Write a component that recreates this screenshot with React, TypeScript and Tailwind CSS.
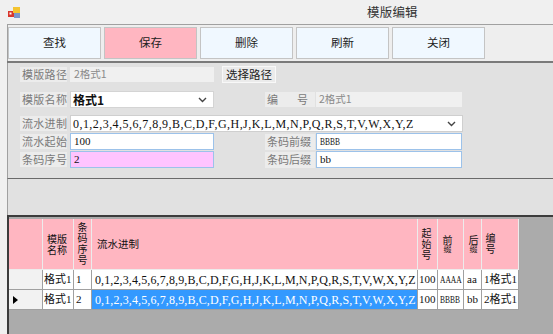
import React from "react";

const SEQ = "0,1,2,3,4,5,6,7,8,9,B,C,D,F,G,H,J,K,L,M,N,P,Q,R,S,T,V,W,X,Y,Z";

function Chevron() {
  return (
    <svg width="9" height="6" viewBox="0 0 9 6">
      <path d="M1 1 L4.5 4.5 L8 1" fill="none" stroke="#444" strokeWidth="1.4" />
    </svg>
  );
}

function Label({ children }: { children: React.ReactNode }) {
  return (
    <div className="w-[47px] h-[15px] bg-[#ececec] flex items-center pl-[2px] text-[11px] tracking-[0.3px] text-[#7a7a7a] font-['Noto_Sans_CJK_SC',sans-serif] leading-none whitespace-nowrap">
      {children}
    </div>
  );
}

function RLabel({ children }: { children: React.ReactNode }) {
  return (
    <div className="w-[50px] h-[16px] bg-[#ececec] flex items-center pl-[2px] text-[11px] text-[#7a7a7a] font-['Noto_Sans_CJK_SC',sans-serif] leading-none whitespace-nowrap">
      {children}
    </div>
  );
}

const tbBtn =
  "w-[93px] h-[32px] bg-[#f0f8ff] border border-[#c4c4c4] flex items-center justify-center text-[11.5px] text-[#222] font-['Noto_Sans_CJK_SC',sans-serif]";

const vText = "[writing-mode:vertical-lr] text-[10px] leading-[11px] tracking-[1px]";

export default function App() {
  return (
    <div className="w-[553px] h-[334px] overflow-hidden bg-[#f0f0f0] flex flex-col font-['Noto_Sans_CJK_SC',sans-serif]">
      {/* title bar */}
      <div className="h-[24px] flex items-center">
        <div className="ml-[8px] mt-[1px]">
          <svg width="13" height="11" viewBox="0 0 13 11">
            <rect x="0" y="4" width="6" height="6" fill="#d8362c" />
            <rect x="1.5" y="5.5" width="2" height="2" fill="#ffffff" />
            <rect x="5" y="0" width="7" height="6" fill="#f4c430" />
            <rect x="6" y="6" width="6" height="5" fill="#7b96c9" />
          </svg>
        </div>
        <div className="ml-[346px] text-[12.5px] text-[#333] tracking-[0.2px]">模版编辑</div>
      </div>

      <div className="ml-[7px] flex-1 flex flex-col">
        {/* toolbar */}
        <div className="h-[37px] border-t border-l border-[#a0a0a0] bg-[#eeeeee] flex items-center gap-[3px]">
          <div className={tbBtn}>查找</div>
          <div className="w-[93px] h-[32px] bg-[#ffb6c1] border border-[#c4c4c4] flex items-center justify-center text-[11.5px] text-[#222]">
            保存
          </div>
          <div className={tbBtn}>删除</div>
          <div className={tbBtn}>刷新</div>
          <div className={tbBtn}>关闭</div>
        </div>
        <div className="h-[2px] bg-[#7a7a7a]" />

        {/* form panel */}
        <div className="h-[116px] bg-[#e1e1e1] border-l border-[#a0a0a0] border-b border-b-[#6a6a6a] pt-[3px] pl-[12px] flex flex-col">
          {/* row 1 */}
          <div className="h-[17px] flex items-center">
            <Label>模版路径</Label>
            <div className="ml-[3px] w-[144px] h-[15px] bg-[#f0f0f0] flex items-center pl-[4px] text-[10.5px] text-[#8a8a8a] leading-none">
              2格式1
            </div>
            <div className="ml-[8px] w-[54px] h-[17px] bg-[#ebebeb] border border-[#f8f8f8] flex items-center justify-center text-[11.5px] text-[#222] leading-none">
              选择路径
            </div>
          </div>
          {/* row 2 */}
          <div className="h-[17px] mt-[8px] flex items-center">
            <Label>模版名称</Label>
            <div className="ml-[3px] w-[144px] h-[17px] bg-white border border-[#d4d4d4] flex items-center justify-between pl-[2px] pr-[6px]">
              <span className="text-[12px] font-bold text-[#111] leading-none">格式1</span>
              <Chevron />
            </div>
            <div className="ml-[51px]">
              <div className="w-[50px] h-[15px] bg-[#ececec] flex items-center pl-[2px] text-[11px] text-[#7a7a7a] leading-none">
                <span>编</span>
                <span className="ml-[19px]">号</span>
              </div>
            </div>
            <div className="ml-[1px] w-[146px] h-[15px] bg-[#f0f0f0] flex items-center pl-[3px] text-[10.5px] text-[#8a8a8a] leading-none">
              2格式1
            </div>
          </div>
          {/* row 3 */}
          <div className="h-[17px] mt-[7px] flex items-center">
            <Label>流水进制</Label>
            <div className="ml-[3px] w-[393px] h-[17px] bg-white border border-[#cfcfcf] flex items-center justify-between pl-[2px] pr-[6px]">
              <span className="text-[12px] tracking-[0.45px] text-[#111] leading-none font-['Liberation_Serif',serif]">
                {SEQ}
              </span>
              <Chevron />
            </div>
          </div>
          {/* row 4 */}
          <div className="h-[17px] mt-[1px] flex items-center">
            <Label>流水起始</Label>
            <div className="ml-[3px] w-[144px] h-[17px] bg-white border border-[#9cc2ea] flex items-center pl-[3px] text-[11px] text-[#111] leading-none font-['Liberation_Serif',serif]">
              100
            </div>
            <div className="ml-[51px]">
              <RLabel>条码前缀</RLabel>
            </div>
            <div className="ml-[1px] w-[146px] h-[17px] bg-white border border-[#9cc2ea] flex items-center pl-[3px] text-[11px] text-[#111] leading-none font-['Liberation_Serif',serif]">
              <span className="inline-block origin-left scale-x-[0.68]">BBBB</span>
            </div>
          </div>
          {/* row 5 */}
          <div className="h-[17px] mt-[1px] flex items-center">
            <Label>条码序号</Label>
            <div className="ml-[3px] w-[144px] h-[17px] bg-[#ffc4ff] border border-[#9cc2ea] flex items-center pl-[3px] text-[11px] text-[#111] leading-none font-['Liberation_Serif',serif]">
              2
            </div>
            <div className="ml-[51px]">
              <RLabel>条码后缀</RLabel>
            </div>
            <div className="ml-[1px] w-[146px] h-[17px] bg-white border border-[#9cc2ea] flex items-center pl-[3px] text-[11px] text-[#111] leading-none font-['Liberation_Serif',serif]">
              bb
            </div>
          </div>
        </div>

        {/* empty band */}
        <div className="h-[36px] bg-[#e1e1e1] border-l border-[#a0a0a0]" />

        {/* grid */}
        <div className="flex-1 bg-[#ababab] border-t-2 border-l-2 border-[#3c3c3c] pt-[2px]">
          <div className="grid grid-cols-[34px_31px_18px_326px_20px_26px_18px_37px] w-max text-[#111]">
            {/* header */}
            <div className="h-[51px] bg-[#ffb6c1] border-r border-b border-[#ececec]" />
            <div className="h-[51px] bg-[#ffb6c1] border-r border-b border-[#ececec] flex flex-col justify-center pl-[4px] text-[10px] leading-[11px]">
              <span>模版</span>
              <span>名称</span>
            </div>
            <div className="h-[51px] bg-[#ffb6c1] border-r border-b border-[#ececec] flex items-center pl-[3px]">
              <span className={vText}>条码序号</span>
            </div>
            <div className="h-[51px] bg-[#ffb6c1] border-r border-b border-[#ececec] flex items-center pl-[5px] text-[10.5px]">
              流水进制
            </div>
            <div className="h-[51px] bg-[#ffb6c1] border-r border-b border-[#ececec] flex items-center pl-[3px]">
              <span className={vText}>起始号</span>
            </div>
            <div className="h-[51px] bg-[#ffb6c1] border-r border-b border-[#ececec] flex items-center pl-[4px]">
              <span className="[writing-mode:vertical-lr] text-[10px] leading-[11px]">
                前<span className="text-[8px]">缀</span>
              </span>
            </div>
            <div className="h-[51px] bg-[#ffb6c1] border-r border-b border-[#ececec] flex items-center pl-[4px]">
              <span className="[writing-mode:vertical-lr] text-[10px] leading-[11px]">
                后<span className="text-[8px]">缀</span>
              </span>
            </div>
            <div className="h-[51px] bg-[#ffb6c1] border-r border-b border-[#ececec] flex items-center pl-[3px]">
              <span className={vText}>编号</span>
            </div>

            {/* row 1 */}
            <div className="h-[20px] bg-[#f2f2f2] border-r border-b border-[#a0a0a0]" />
            <div className="h-[20px] bg-white border-r border-b border-[#a0a0a0] flex items-center pl-[1px] text-[11px] whitespace-nowrap font-['Liberation_Serif','Noto_Sans_CJK_SC',serif]">
              格式1
            </div>
            <div className="h-[20px] bg-white border-r border-b border-[#a0a0a0] flex items-center pl-[2px] text-[11px] font-['Liberation_Serif',serif]">
              1
            </div>
            <div className="h-[20px] bg-white border-r border-b border-[#a0a0a0] flex items-center pl-[3px] text-[12px] tracking-[0.12px] whitespace-nowrap font-['Liberation_Serif',serif]">
              {SEQ}
            </div>
            <div className="h-[20px] bg-white border-r border-b border-[#a0a0a0] flex items-center pl-[1px] text-[11px] font-['Liberation_Serif',serif]">
              100
            </div>
            <div className="h-[20px] bg-white border-r border-b border-[#a0a0a0] flex items-center pl-[2px] text-[11px] font-['Liberation_Serif',serif]">
              <span className="inline-block origin-left scale-x-[0.68]">AAAA</span>
            </div>
            <div className="h-[20px] bg-white border-r border-b border-[#a0a0a0] flex items-center pl-[3px] text-[11px] font-['Liberation_Serif',serif]">
              aa
            </div>
            <div className="h-[20px] bg-white border-r border-b border-[#a0a0a0] flex items-center pl-[2px] text-[11px] whitespace-nowrap font-['Liberation_Serif','Noto_Sans_CJK_SC',serif]">
              1格式1
            </div>

            {/* row 2 */}
            <div className="h-[20px] bg-[#f2f2f2] border-r border-b border-[#a0a0a0] flex items-center pl-[4px]">
              <svg width="5" height="8" viewBox="0 0 5 8">
                <path d="M0 0 L5 4 L0 8 Z" fill="#000" />
              </svg>
            </div>
            <div className="h-[20px] bg-white border-r border-b border-[#a0a0a0] flex items-center pl-[1px] text-[11px] whitespace-nowrap font-['Liberation_Serif','Noto_Sans_CJK_SC',serif]">
              格式1
            </div>
            <div className="h-[20px] bg-white border-r border-b border-[#a0a0a0] flex items-center pl-[2px] text-[11px] font-['Liberation_Serif',serif]">
              2
            </div>
            <div className="h-[20px] bg-[#3399ff] text-white border-r border-b border-[#a0a0a0] flex items-center pl-[3px] text-[12px] tracking-[0.12px] whitespace-nowrap font-['Liberation_Serif',serif]">
              {SEQ}
            </div>
            <div className="h-[20px] bg-white border-r border-b border-[#a0a0a0] flex items-center pl-[1px] text-[11px] font-['Liberation_Serif',serif]">
              100
            </div>
            <div className="h-[20px] bg-white border-r border-b border-[#a0a0a0] flex items-center pl-[2px] text-[11px] font-['Liberation_Serif',serif]">
              <span className="inline-block origin-left scale-x-[0.68]">BBBB</span>
            </div>
            <div className="h-[20px] bg-white border-r border-b border-[#a0a0a0] flex items-center pl-[3px] text-[11px] font-['Liberation_Serif',serif]">
              bb
            </div>
            <div className="h-[20px] bg-white border-r border-b border-[#a0a0a0] flex items-center pl-[2px] text-[11px] whitespace-nowrap font-['Liberation_Serif','Noto_Sans_CJK_SC',serif]">
              2格式1
            </div>
          </div>
        </div>
      </div>
    </div>
  );
}
